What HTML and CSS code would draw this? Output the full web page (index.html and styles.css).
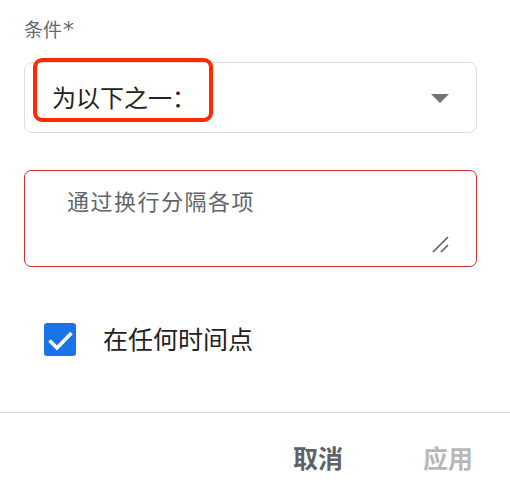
FILE: index.html
```html
<!DOCTYPE html>
<html lang="zh-CN">
<head>
<meta charset="utf-8">
<link rel="stylesheet" href="styles.css">
</head>
<body>
<div class="panel">
  <div class="content">
    <div class="label">条件<span class="req">*</span></div>
    <div class="select">
      <span class="select-text">为以下之一：</span>
      <span class="arrow"></span>
      <span class="highlight"></span>
    </div>
    <div class="textarea">
      <span class="placeholder">通过换行分隔各项</span>
      <svg class="grip" width="17" height="17" viewBox="0 0 17 17"><path d="M1 16 L16 1 M9 16 L16 9" stroke="#5f5f5f" stroke-width="1.6" fill="none"/></svg>
    </div>
    <div class="check-row">
      <span class="checkbox"><svg width="32" height="33" viewBox="0 0 32 33"><path d="M5.5 17.5 L13 25 L27.5 10" stroke="#fff" stroke-width="3.6" fill="none"/></svg></span>
      <span class="check-label">在任何时间点</span>
    </div>
  </div>
  <div class="divider"></div>
  <div class="footer">
    <span class="btn cancel">取消</span>
    <span class="btn apply">应用</span>
  </div>
</div>
</body>
</html>
```
FILE: styles.css
```css
html, body {
  margin: 0;
  padding: 0;
  background: #ffffff;
}
body {
  font-family: "Noto Sans CJK SC", Roboto, sans-serif;
  width: 510px;
  height: 500px;
  overflow: hidden;
}
.content {
  padding: 16px 33px 0 24px;
}
.label {
  font-size: 19px;
  line-height: 25px;
  height: 25px;
  color: #666a6e;
}
.req {
  font-family: "DejaVu Sans", sans-serif;
  font-size: 22px;
  line-height: 0;
  margin-left: 1px;
}
.select {
  position: relative;
  margin-top: 21px;
  height: 71px;
  box-sizing: border-box;
  border: 1px solid #dcdcdc;
  border-radius: 8px;
  display: flex;
  align-items: center;
  justify-content: space-between;
  padding: 0 27px 2px 27px;
}
.select-text {
  font-size: 24px;
  line-height: 32px;
  color: #222222;
}
.arrow {
  width: 0;
  height: 0;
  border-left: 9px solid transparent;
  border-right: 9px solid transparent;
  border-top: 9px solid #737373;
  margin-top: 3px;
}
.highlight {
  position: absolute;
  left: 8px;
  top: -5px;
  width: 180px;
  height: 64px;
  box-sizing: border-box;
  border: 4px solid #ff2a00;
  border-radius: 9px;
}
.textarea {
  margin-top: 37px;
  height: 97px;
  box-sizing: border-box;
  border: 1px solid #d32f2f;
  border-radius: 7px;
  padding: 15px 27px 13px 42px;
  display: flex;
  flex-direction: column;
}
.placeholder {
  font-size: 22px;
  line-height: 28px;
  letter-spacing: 1.5px;
  color: #62666a;
}
.grip {
  margin-top: auto;
  align-self: flex-end;
}
.check-row {
  margin-top: 55px;
  padding-left: 20px;
  display: flex;
  align-items: center;
  gap: 27px;
}
.checkbox {
  width: 32px;
  height: 33px;
  background: #1a73e8;
  border-radius: 3px;
  display: flex;
}
.check-label {
  font-size: 25px;
  line-height: 32px;
  padding-bottom: 3px;
  color: #222222;
}
.divider {
  margin-top: 55px;
  height: 1px;
  background: #dadada;
}
.footer {
  display: flex;
  justify-content: flex-end;
  gap: 80px;
  padding: 28px 37px 0 0;
}
.btn {
  font-size: 25px;
  line-height: 32px;
  font-weight: 700;
}
.cancel {
  color: #5f6368;
}
.apply {
  color: #b8b8b8;
}
```
